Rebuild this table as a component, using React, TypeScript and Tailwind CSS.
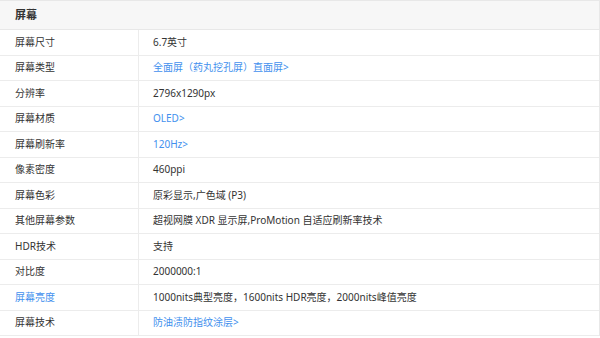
const rows: { label: string; value: string; labelLink?: boolean; valueLink?: boolean }[] = [
  { label: "屏幕尺寸", value: "6.7英寸" },
  { label: "屏幕类型", value: "全面屏（药丸挖孔屏）直面屏>", valueLink: true },
  { label: "分辨率", value: "2796x1290px" },
  { label: "屏幕材质", value: "OLED>", valueLink: true },
  { label: "屏幕刷新率", value: "120Hz>", valueLink: true },
  { label: "像素密度", value: "460ppi" },
  { label: "屏幕色彩", value: "原彩显示,广色域 (P3)" },
  { label: "其他屏幕参数", value: "超视网膜 XDR 显示屏,ProMotion 自适应刷新率技术" },
  { label: "HDR技术", value: "支持" },
  { label: "对比度", value: "2000000:1" },
  { label: "屏幕亮度", value: "1000nits典型亮度，1600nits HDR亮度，2000nits峰值亮度", labelLink: true },
  { label: "屏幕技术", value: "防油渍防指纹涂层>", valueLink: true },
];

export default function App() {
  return (
    <div
      className="w-[600px] h-[338px] bg-white overflow-hidden text-[10px] text-[#333]"
      style={{ fontFamily: '"Noto Sans", "Noto Sans CJK SC", sans-serif' }}
    >
      <div className="border-t border-r border-[#e8e8e8]">
        {/* Section header */}
        <div className="h-[29px] bg-[#f7f7f7] border-b border-[#e8e8e8] flex items-center pl-[15px]">
          <span className="text-[11px] font-bold text-[#333]">屏幕</span>
        </div>

        {rows.map((r) => (
          <div key={r.label} className="flex h-[25.5px] border-b border-[#ececec]">
            <div
              className={`w-[139px] shrink-0 border-r border-[#ececec] flex items-center pl-[15px] ${
                r.labelLink ? "text-[#4290ee]" : "text-[#333]"
              }`}
            >
              {r.label}
            </div>
            <div
              className={`flex-1 flex items-center pl-[14px] ${
                r.valueLink ? "text-[#4290ee]" : "text-[#333]"
              }`}
            >
              {r.value}
            </div>
          </div>
        ))}
      </div>
    </div>
  );
}
